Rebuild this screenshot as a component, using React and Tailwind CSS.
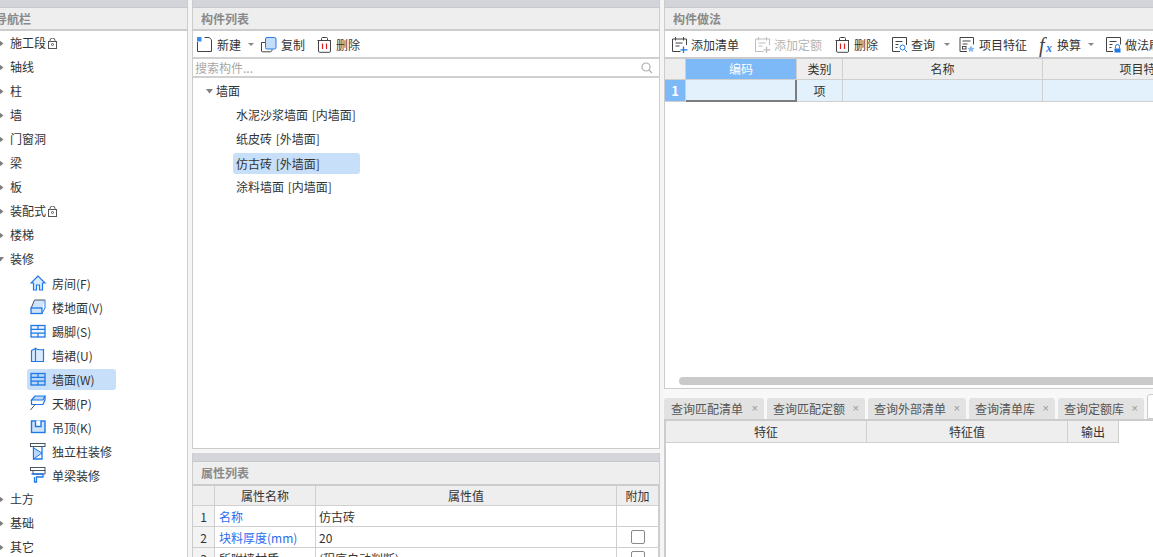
const B = "#1e78e6";
const D = "#4a5560";

const Svg = ({ children, s = 18 }) => (
  <svg width={s} height={s} viewBox="0 0 18 18" fill="none" className="shrink-0">{children}</svg>
);

const Lock = () => (
  <svg width="9" height="11" viewBox="0 0 9 11" fill="none" className="shrink-0">
    <path d="M2 3.500V2.500a2.500 2.500 0 0 1 5 0v1" stroke="#555" />
    <rect x="0.500" y="3.500" width="8" height="7" stroke="#555" />
    <circle cx="4.500" cy="6.500" r="1" stroke="#555" />
  </svg>
);

const navIcons = {
  room: <Svg><path d="M8 1 1 8h2.500v7H6.500v-5h3v5H12.500V8H15z" stroke={B} fill="#dcebfb" strokeWidth="1.200" /></Svg>,
  floor: <Svg><path d="M4.500 1 1 9h11l3-8z" fill="#cfe3fa" /><path d="M4.500 1H15M4.500 1 1.200 9" stroke={D} /><rect x="1" y="9" width="11" height="5.500" stroke={B} fill="#cfe3fa" strokeWidth="1.300" /><path d="M12 14.500 15 9V1" stroke={B} /></Svg>,
  skirt: <Svg><rect x="1" y="2.500" width="14" height="11.500" stroke={B} fill="#eef5fd" strokeWidth="1.300" /><path d="M1 6.300h14M1 10.200h14M8 2.500v3.800M8 10.200V14" stroke={B} strokeWidth="1.200" /></Svg>,
  dado: <Svg><path d="M1.500 3.500 5.500 1.500V14.500H1.500zM5.500 1.500C8 3 10.500 3 13.500 2.500V14.500H5.500z" stroke={B} fill="#dcebfb" strokeWidth="1.200" /></Svg>,
  wall: <Svg><rect x="1" y="2.500" width="14" height="11.500" stroke={B} fill="#b9d7f8" strokeWidth="1.300" /><path d="M1 6.300h14M1 10.200h14M8 2.500v3.800M8 10.200V14" stroke={B} strokeWidth="1.200" /></Svg>,
  ceiling: <Svg><path d="M5 1h10l-2 4H1.500z" stroke={B} fill="#b9d7f8" strokeWidth="1.200" /><path d="M1.500 5v4.500H13L15 5V1" stroke={B} strokeWidth="1.200" /><path d="M5 9.500.5 15" stroke={D} /></Svg>,
  hang: <Svg><rect x="1.500" y="2" width="13.500" height="11.500" stroke={B} fill="#cfe3fa" strokeWidth="1.400" /><path d="M5.500 1.500v6h5.500v-6" stroke={B} fill="#fff" strokeWidth="1.400" /></Svg>,
  column: <Svg><rect x="0.500" y="0.500" width="14.500" height="3" stroke={D} /><path d="M3.500 3.500v12.500h8.500V3.500" stroke={B} strokeWidth="1.300" /><path d="M3.500 5l8.500 5-8.500 6z" fill="#b9d7f8" stroke={B} /></Svg>,
  beam: <Svg><rect x="0.500" y="0.500" width="14.500" height="3" stroke={D} /><path d="M3 3.500V7h12V3.500" stroke={D} /><path d="M1.500 7h11.500v3H6.500v5H4.500v-5" stroke={B} strokeWidth="1.300" /></Svg>,
};

const Caret = ({ open }) =>
  open ? (
    <svg width="7" height="5" viewBox="0 0 7 5" className="shrink-0"><path d="M0 0h7L3.500 4.500z" fill="#808080" /></svg>
  ) : (
    <svg width="5" height="7" viewBox="0 0 5 7" className="shrink-0"><path d="M0 0l4.500 3.500L0 7z" fill="#808080" /></svg>
  );

const Top = ({ label, className = "", band = "h-[8px]", title = "h-[21px]" }) => (
  <div className="shrink-0">
    <div className={`bg-[#d3d5da] border-b border-[#c6c8cc] ${band}`} />
    <div className={`bg-[#eeeeee] flex items-center text-[12px] font-bold text-[#8a8a8a] whitespace-nowrap ${title} ${className}`}>{label}</div>
    <div className="h-[2px] bg-[#cccccc]" />
  </div>
);

const NavRow = ({ label, lock, open }) => (
  <div className="h-[24px] shrink-0 flex items-center relative pl-[10px] gap-[2px]">
    <span className={`absolute ${open ? "left-[-3px] top-[10px]" : "left-[-1px] top-[9px]"}`}><Caret open={open} /></span>
    <span>{label}</span>
    {lock && <Lock />}
  </div>
);

const SubRow = ({ icon, label, active }) => (
  <div className={`h-[21px] shrink-0 mt-[2px] mb-[1px] w-[89px] ml-[27px] pl-[3px] rounded-[3px] flex items-center gap-[4px] ${active ? "bg-[#c7dff9]" : ""}`}>
    {navIcons[icon]}
    <span className="whitespace-nowrap">{label}</span>
  </div>
);

const Tool = ({ icon, label, caret, dim, gap = "gap-[3px]", caretMl = "ml-[7px]", className = "" }) => (
  <div className={`flex items-center ${gap} whitespace-nowrap shrink-0 ${dim ? "text-[#b5b5b5]" : ""} ${className}`}>
    {icon}
    <span>{label}</span>
    {caret && <span className={`w-0 h-0 border-x-[3px] border-x-transparent border-t-[3px] border-t-[#888] ${caretMl}`} />}
  </div>
);

const IconNew = <Svg><path d="M1.500 6v9.500h14V5C15.500 3 14 1.500 12 1.500H8.500" stroke="#444" /><rect x="1" y="1" width="4.500" height="4.500" fill="#3b8cf0" /></Svg>;
const IconCopy = <Svg><rect x="5.500" y="1.500" width="10.500" height="11.500" rx="1.500" fill="#c4ddf8" stroke="#2b7be0" /><path d="M5 6.500H1.500V15C1.500 15.500 2 15.800 2.500 15.800H10.500C11.500 15.800 12 15 12 13.500" stroke="#444" /></Svg>;
const IconTrash = <Svg><path d="M1.500 4.500h13.500M5.500 4.500V2.500C5.500 1.800 6 1.500 6.500 1.500h4c.5 0 1 .3 1 1v2M2.500 4.500V15c0 .8.500 1.300 1.200 1.300h9.800c.7 0 1-.5 1-1.300V4.500" stroke="#444" /><path d="M6.500 7.500v5.500M10.500 7.500v5.500" stroke="#e02020" strokeWidth="1.200" /></Svg>;
const IconAdd = ({ dim }) => {
  const c = dim ? "#bdbdbd" : "#444";
  const a = dim ? "#bdbdbd" : B;
  return <Svg><path d="M15.500 9V3H1.500v12.500h8" stroke={c} /><path d="M4.500 1v3.500M12.500 1v3.500M4.500 7h7M4.500 10h4" stroke={c} /><path d="M12.500 10.500v6.500M9.500 13.800h7" stroke={a} strokeWidth="1.300" /></Svg>;
};
const IconQuery = <Svg><path d="M9 15.500H1.500V1.500h14v7.500" stroke="#444" /><path d="M4.500 5.500h7M4.500 8.500h3M4.500 11.500h2" stroke="#444" /><circle cx="11.500" cy="11.500" r="2.500" stroke={B} /><path d="M13.500 13.500 16 16" stroke={B} /></Svg>;
const IconFeature = <Svg><path d="M8 15.500H1V1.500h13.500v7" stroke="#444" /><path d="M3.500 5h8M3.500 8h5" stroke="#444" /><rect x="3.500" y="10.500" width="3.500" height="2.500" stroke="#444" /><path d="M12 9.500l1.200 2.200 2.300.3-1.600 1.700.3 2.300-2.200-1-2.200 1 .3-2.300L8.500 12l2.300-.3z" fill="#8ab8f2" /></Svg>;
const IconFx = (
  <span className="w-[18px] h-[18px] relative shrink-0 font-['Liberation_Serif',serif] italic text-[20px] leading-[18px] text-[#444]">
    <span className="absolute left-[0px] top-0">f</span>
    <span className="absolute left-[7px] top-[6px] text-[12px] font-bold leading-[12px] text-[#2b7be0]">x</span>
  </span>
);
const IconMethod = <Svg><path d="M8 15.500H1.500V1.500h14v7" stroke="#444" /><path d="M4.500 5.500h7M4.500 8.500h3M4.500 11.500h2" stroke="#444" /><path d="M10.500 12.500v-2a2 2 0 0 1 4 0v2" stroke={B} /><rect x="9.500" y="12.500" width="6" height="4" fill={B} /></Svg>;

const TabX = () => <span className="text-[11px] text-[#999] font-['Liberation_Sans',sans-serif] leading-none">×</span>;

const Tab = ({ label, w, pl = "pl-[6px]" }) => (
  <div className={`h-[21px] rounded-t-[3px] bg-[#e2e2e2] flex items-center justify-between pr-[6px] shrink-0 text-[#555] whitespace-nowrap ${pl} ${w}`}>
    <span>{label}</span>
    <TabX />
  </div>
);

const cell = "border-r border-b border-[#cfcfcf] flex items-center shrink-0";
const head = `${cell} justify-center bg-[#eeeeee]`;

const PropRow = ({ n, name, value, check, blue = true }) => (
  <div className="flex h-[21px] shrink-0">
    <div className={`${cell} w-[22px] justify-center pt-[1px] bg-[#f3f3f3]`}>{n}</div>
    <div className={`${cell} w-[101px] pl-[4px] pt-[1px] ${blue ? "text-[#2b6cf0]" : ""}`}>{name}</div>
    <div className={`${cell} w-[301px] pl-[3px] pt-[1px]`}>{value}</div>
    <div className={`${cell} w-[42px] justify-center`}>
      {check && <span className="w-[14px] h-[14px] border border-[#888] rounded-[2px] bg-white" />}
    </div>
  </div>
);

export default function App() {
  return (
    <div className="w-[1153px] h-[557px] overflow-hidden flex bg-[#f5f5f5] text-[12px] text-[#333] font-['Noto_Sans_CJK_SC','Liberation_Sans',sans-serif]">
      {/* Left navigation */}
      <div className="w-[188px] h-full shrink-0 flex flex-col bg-white border-r border-[#cccccc] overflow-hidden">
        <Top label={<span className="ml-[-5px]">导航栏</span>} />
        <div className="flex flex-col leading-[24px] text-[#333]">
          <NavRow label="施工段" lock />
          <NavRow label="轴线" />
          <NavRow label="柱" />
          <NavRow label="墙" />
          <NavRow label="门窗洞" />
          <NavRow label="梁" />
          <NavRow label="板" />
          <NavRow label="装配式" lock />
          <NavRow label="楼梯" />
          <NavRow label="装修" open />
          <SubRow icon="room" label="房间(F)" />
          <SubRow icon="floor" label="楼地面(V)" />
          <SubRow icon="skirt" label="踢脚(S)" />
          <SubRow icon="dado" label="墙裙(U)" />
          <SubRow icon="wall" label="墙面(W)" active />
          <SubRow icon="ceiling" label="天棚(P)" />
          <SubRow icon="hang" label="吊顶(K)" />
          <SubRow icon="column" label="独立柱装修" />
          <SubRow icon="beam" label="单梁装修" />
          <NavRow label="土方" />
          <NavRow label="基础" />
          <NavRow label="其它" />
        </div>
      </div>

      {/* Middle */}
      <div className="w-[468px] ml-[4px] h-full shrink-0 flex flex-col">
        <div className="h-[449px] shrink-0 flex flex-col bg-white border-x border-b border-[#cccccc]">
          <Top label="构件列表" className="pl-[8px]" />
          <div className="h-[26px] pt-[1px] shrink-0 flex items-center pl-[3px]">
            <Tool icon={IconNew} label="新建" caret caretMl="ml-[4px]" />
            <Tool icon={IconCopy} label="复制" className="ml-[6px]" />
            <Tool icon={IconTrash} label="删除" gap="gap-[2px]" className="ml-[11px]" />
          </div>
          <div className="h-[21px] shrink-0 border-y-2 border-[#d0d0d0] flex items-center justify-between pl-[2px] pr-[6px] text-[#a8a8a8]">
            <span>搜索构件...</span>
            <svg width="12" height="12" viewBox="0 0 12 12" fill="none"><circle cx="5" cy="5" r="4" stroke="#b0b0b0" strokeWidth="1.200" /><path d="M8 8l3 3" stroke="#b0b0b0" strokeWidth="1.300" /></svg>
          </div>
          <div className="flex flex-col pt-[1px] [word-spacing:1px]">
            <div className="h-[24px] flex items-center pl-[13px] gap-[3px]"><Caret open />墙面</div>
            <div className="h-[24px] flex items-center pl-[43px]">水泥沙浆墙面 [内墙面]</div>
            <div className="h-[24px] flex items-center pl-[43px]">纸皮砖 [外墙面]</div>
            <div className="h-[21px] mt-[2px] mb-[1px] w-[127px] ml-[40px] pl-[3px] flex items-center bg-[#c7dff9] rounded-[3px]">仿古砖 [外墙面]</div>
            <div className="h-[24px] flex items-center pl-[43px]">涂料墙面 [内墙面]</div>
          </div>
        </div>
        <div className="h-[4px] shrink-0" />
        <div className="flex-1 min-h-0 flex flex-col bg-white border-x border-[#cccccc] overflow-hidden">
          <Top label="属性列表" className="pl-[8px]" band="h-[9px]" title="h-[22px]" />
          <div className="flex h-[20px] shrink-0">
            <div className={`${head} w-[22px]`} />
            <div className={`${head} w-[101px]`}>属性名称</div>
            <div className={`${head} w-[301px]`}>属性值</div>
            <div className={`${head} w-[42px]`}>附加</div>
          </div>
          <PropRow n="1" name="名称" value="仿古砖" />
          <PropRow n="2" name="块料厚度(mm)" value="20" check />
          <PropRow n="3" name="所附墙材质" value="(程序自动判断)" check blue={false} />
        </div>
      </div>

      {/* Right */}
      <div className="ml-[4px] flex-1 min-w-0 h-full flex flex-col overflow-hidden">
        <div className="h-[389px] shrink-0 flex flex-col bg-white border-l border-b border-[#cccccc] overflow-hidden">
          <Top label="构件做法" className="pl-[8px]" />
          <div className="h-[26px] pt-[1px] shrink-0 flex items-center pl-[6px] whitespace-nowrap overflow-hidden">
            <Tool icon={<IconAdd />} label="添加清单" gap="gap-[2px]" />
            <Tool icon={<IconAdd dim />} label="添加定额" dim gap="gap-[2px]" className="ml-[15px]" />
            <Tool icon={IconTrash} label="删除" gap="gap-[2px]" className="ml-[12px]" />
            <Tool icon={IconQuery} label="查询" caret gap="gap-[2px]" className="ml-[13px]" />
            <Tool icon={IconFeature} label="项目特征" gap="gap-[2px]" className="ml-[9px]" />
            <Tool icon={IconFx} label="换算" caret gap="gap-[0px]" className="ml-[12px]" />
            <Tool icon={IconMethod} label="做法刷" gap="gap-[2px]" className="ml-[11px]" />
          </div>
          <div className="flex h-[21px] shrink-0 border-t-2 border-[#cccccc] box-content">
            <div className={`${head} w-[21px]`} />
            <div className={`${cell} w-[111px] justify-center bg-[#7db8f7] text-white border-[#5ea3ec]`}>编码</div>
            <div className={`${head} w-[46px]`}>类别</div>
            <div className={`${head} w-[200px]`}>名称</div>
            <div className={`${head} w-[202px] whitespace-nowrap`}>项目特征</div>
          </div>
          <div className="flex h-[22px] shrink-0">
            <div className={`${cell} w-[21px] justify-center bg-[#7db8f7] text-white font-bold text-[13px]`}>1</div>
            <div className="w-[111px] shrink-0 bg-[#e3f1fd] border-r-2 border-b-2 border-[#7d7d7d]" />
            <div className={`${cell} w-[46px] justify-center bg-[#e3f1fd]`}>项</div>
            <div className={`${cell} w-[200px] bg-[#e3f1fd]`} />
            <div className={`${cell} w-[202px] bg-[#e3f1fd]`} />
          </div>
          <div className="flex-1" />
          <div className="h-[8px] ml-[14px] mr-[-20px] mb-[3px] shrink-0 rounded-full bg-[#cacaca]" />
        </div>
        <div className="h-[5px] shrink-0 bg-[#f8f8f8]" />
        <div className="flex items-end gap-[3px] h-[25px] shrink-0 bg-[#f8f8f8]">
          <Tab label="查询匹配清单" w="w-[100px]" pl="pl-[7px]" />
          <Tab label="查询匹配定额" w="w-[98px]" />
          <Tab label="查询外部清单" w="w-[98px]" />
          <Tab label="查询清单库" w="w-[86px]" />
          <Tab label="查询定额库" w="w-[86px]" />
          <div className="h-[25px] w-[20px] shrink-0 bg-white border border-[#cccccc] rounded-t-[3px]" />
        </div>
        <div className="flex-1 min-h-0 bg-white border-l-2 border-t-2 border-[#cccccc]">
          <div className="flex h-[22px]">
            <div className={`${head} w-[201px]`}>特征</div>
            <div className={`${head} w-[201px]`}>特征值</div>
            <div className={`${head} w-[51px]`}>输出</div>
          </div>
        </div>
      </div>
    </div>
  );
}
